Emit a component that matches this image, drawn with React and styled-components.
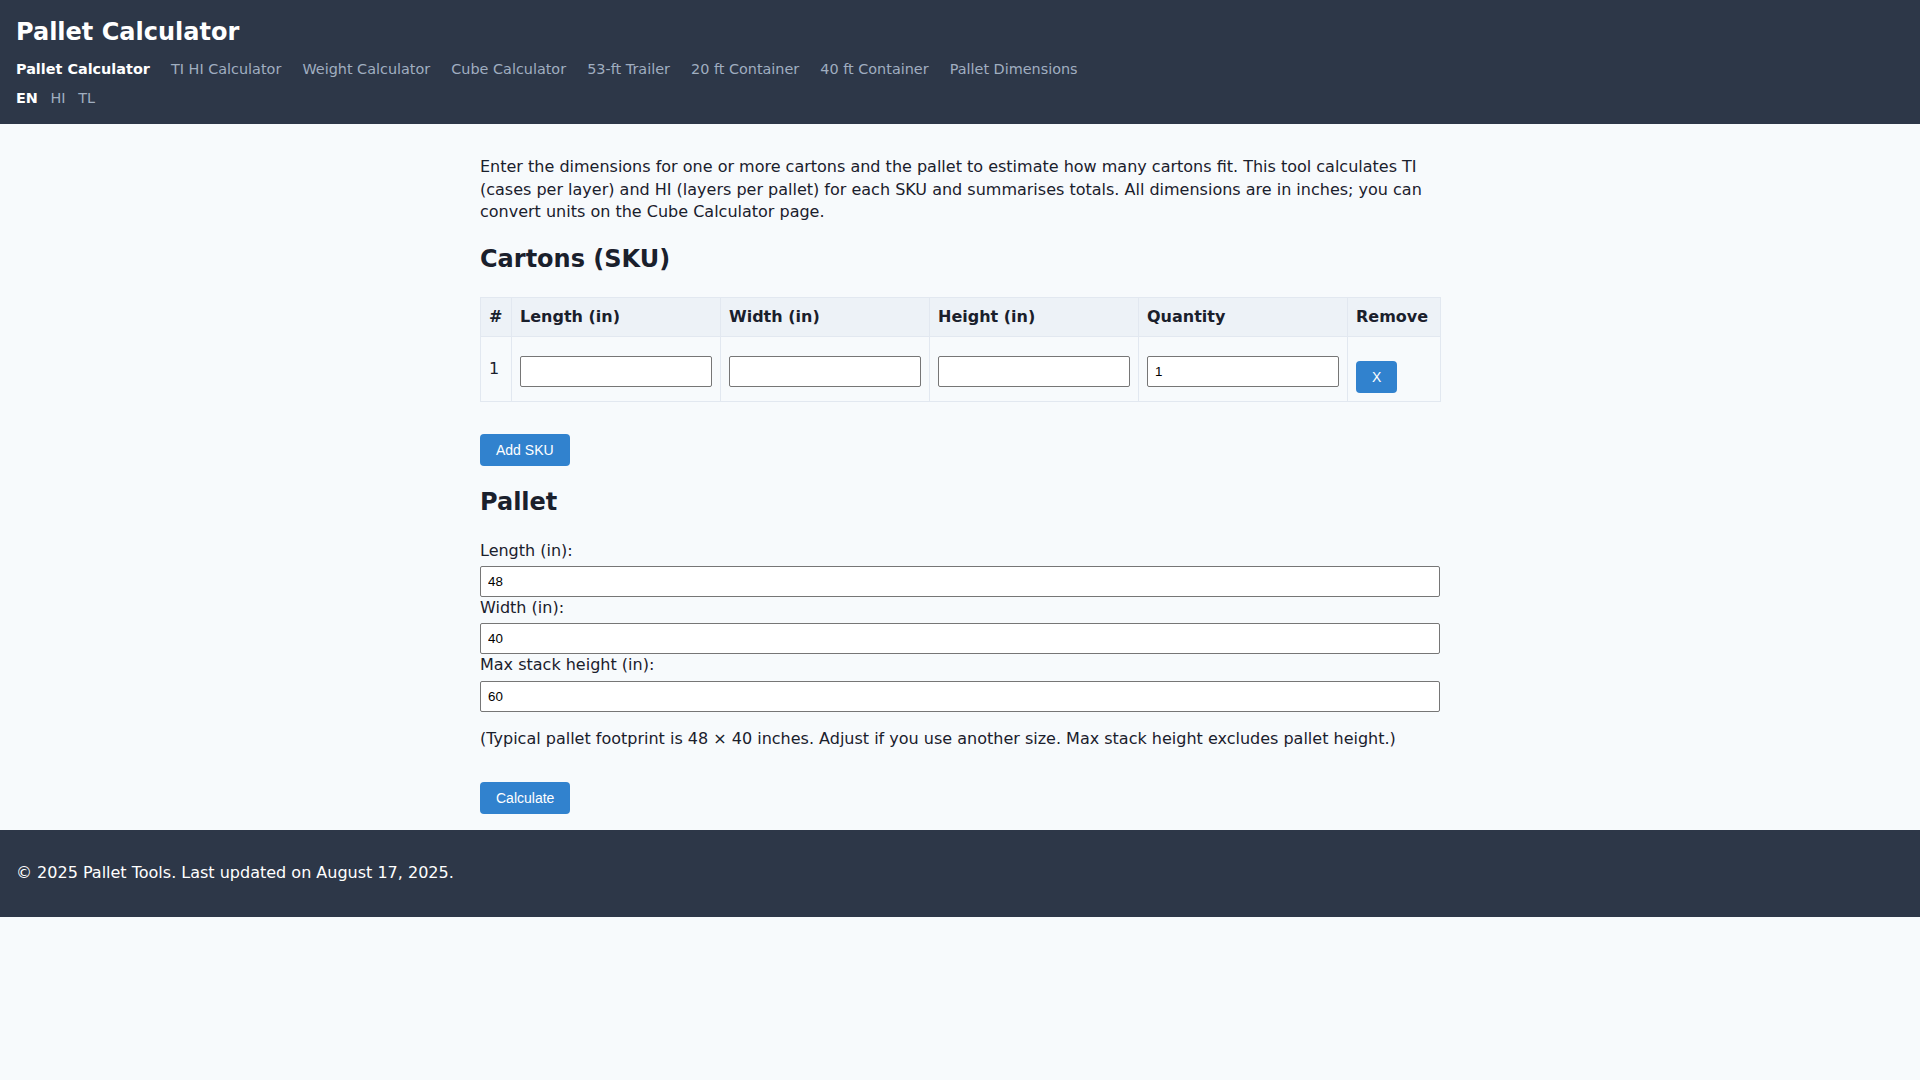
import React from "react";
import styled, { createGlobalStyle } from "styled-components";

const colors = {
  dark: "#2d3748",
  text: "#1a202c",
  page: "#f7fafc",
  muted: "#a0aec0",
  blue: "#3182ce",
  head: "#edf2f7",
  line: "#e2e8f0",
};

const GlobalStyle = createGlobalStyle`
  html, body {
    margin: 0;
    padding: 0;
    background: ${colors.page};
  }
  body {
    font-family: "DejaVu Sans", Verdana, sans-serif;
    font-size: 16px;
    line-height: 1.4;
    color: ${colors.text};
  }
  * {
    box-sizing: border-box;
  }
`;

const Header = styled.header`
  background: ${colors.dark};
  color: #fff;
  padding: 16px;
`;

const Title = styled.h1`
  margin: 0 0 11px;
  font-size: 24px;
  line-height: 32px;
  font-weight: 700;
`;

const NavRow = styled.nav`
  display: flex;
  gap: ${(p) => p.$gap || 21.1}px;
  font-size: 14.4px;
  line-height: 1.4;
  margin-bottom: ${(p) => p.$mb || 0}px;
`;

const NavLink = styled.a`
  color: ${(p) => (p.$active ? "#fff" : colors.muted)};
  font-weight: ${(p) => (p.$active ? 700 : 400)};
  text-decoration: none;
  cursor: pointer;
`;

const Main = styled.main`
  max-width: 960px;
  margin: 0 auto;
  padding: 16px 0;
`;

const Intro = styled.p`
  margin: 16px 0;
`;

const H2 = styled.h2`
  font-size: 24px;
  margin: 19.92px 0;
`;

const TableWrap = styled.div`
  margin-bottom: 16px;
`;

const Table = styled.table`
  width: 100%;
  border-collapse: collapse;
  table-layout: fixed;
`;

const Th = styled.th`
  width: ${(p) => p.$w}px;
  background: ${colors.head};
  border: 1px solid ${colors.line};
  padding: 8px;
  text-align: left;
  font-weight: 700;
`;

const Td = styled.td`
  border: 1px solid ${colors.line};
  padding: 8px;
  vertical-align: middle;
`;

const Input = styled.input`
  display: block;
  width: 100%;
  margin: 4px 0 0;
  padding: 7px 7px;
  font-family: "Liberation Sans", Arial, sans-serif;
  font-size: 13.33px;
  line-height: normal;
  color: #000;
  background: #fff;
  border: 1px solid #767676;
  border-radius: 2px;
`;

const Button = styled.button`
  margin-top: 16px;
  padding: 8px 16px;
  font-family: "Liberation Sans", Arial, sans-serif;
  font-size: 14px;
  line-height: normal;
  color: #fff;
  background: ${colors.blue};
  border: none;
  border-radius: 4px;
  cursor: pointer;
`;

const Label = styled.label`
  display: block;
`;

const Note = styled.p`
  margin: 16px 0;
`;

const Footer = styled.footer`
  background: ${colors.dark};
  color: #fff;
  padding: 16px;
`;

const FooterText = styled.p`
  margin: 16px 0;
`;

const navItems = [
  "Pallet Calculator",
  "TI HI Calculator",
  "Weight Calculator",
  "Cube Calculator",
  "53-ft Trailer",
  "20 ft Container",
  "40 ft Container",
  "Pallet Dimensions",
];

const columns = [
  { label: "#", w: 31 },
  { label: "Length (in)", w: 209 },
  { label: "Width (in)", w: 209 },
  { label: "Height (in)", w: 209 },
  { label: "Quantity", w: 209 },
  { label: "Remove", w: 93 },
];

const palletFields = [
  { label: "Length (in):", value: "48" },
  { label: "Width (in):", value: "40" },
  { label: "Max stack height (in):", value: "60" },
];

export default function App() {
  return (
    <>
      <GlobalStyle />
      <Header>
        <Title>Pallet Calculator</Title>
        <NavRow $mb={9}>
          {navItems.map((item, i) => (
            <NavLink key={item} $active={i === 0}>
              {item}
            </NavLink>
          ))}
        </NavRow>
        <NavRow $gap={12.6}>
          <NavLink $active>EN</NavLink>
          <NavLink>HI</NavLink>
          <NavLink>TL</NavLink>
        </NavRow>
      </Header>

      <Main>
        <Intro>
          Enter the dimensions for one or more cartons and the pallet to estimate how many
          cartons fit. This tool calculates TI (cases per layer) and HI (layers per pallet)
          for each SKU and summarises totals. All dimensions are in inches; you can convert
          units on the Cube Calculator page.
        </Intro>

        <H2>Cartons (SKU)</H2>
        <TableWrap>
          <Table>
            <thead>
              <tr>
                {columns.map((c) => (
                  <Th key={c.label} $w={c.w}>
                    {c.label}
                  </Th>
                ))}
              </tr>
            </thead>
            <tbody>
              <tr>
                <Td>1</Td>
                <Td>
                  <Input type="text" defaultValue="" />
                </Td>
                <Td>
                  <Input type="text" defaultValue="" />
                </Td>
                <Td>
                  <Input type="text" defaultValue="" />
                </Td>
                <Td>
                  <Input type="text" defaultValue="1" />
                </Td>
                <Td>
                  <Button>X</Button>
                </Td>
              </tr>
            </tbody>
          </Table>
        </TableWrap>
        <div>
          <Button>Add SKU</Button>
        </div>

        <H2>Pallet</H2>
        {palletFields.map((f) => (
          <div key={f.label}>
            <Label>{f.label}</Label>
            <Input type="text" defaultValue={f.value} />
          </div>
        ))}
        <Note>
          (Typical pallet footprint is 48 × 40 inches. Adjust if you use another size. Max
          stack height excludes pallet height.)
        </Note>
        <div>
          <Button>Calculate</Button>
        </div>
      </Main>

      <Footer>
        <FooterText>© 2025 Pallet Tools. Last updated on August 17, 2025.</FooterText>
      </Footer>
    </>
  );
}
